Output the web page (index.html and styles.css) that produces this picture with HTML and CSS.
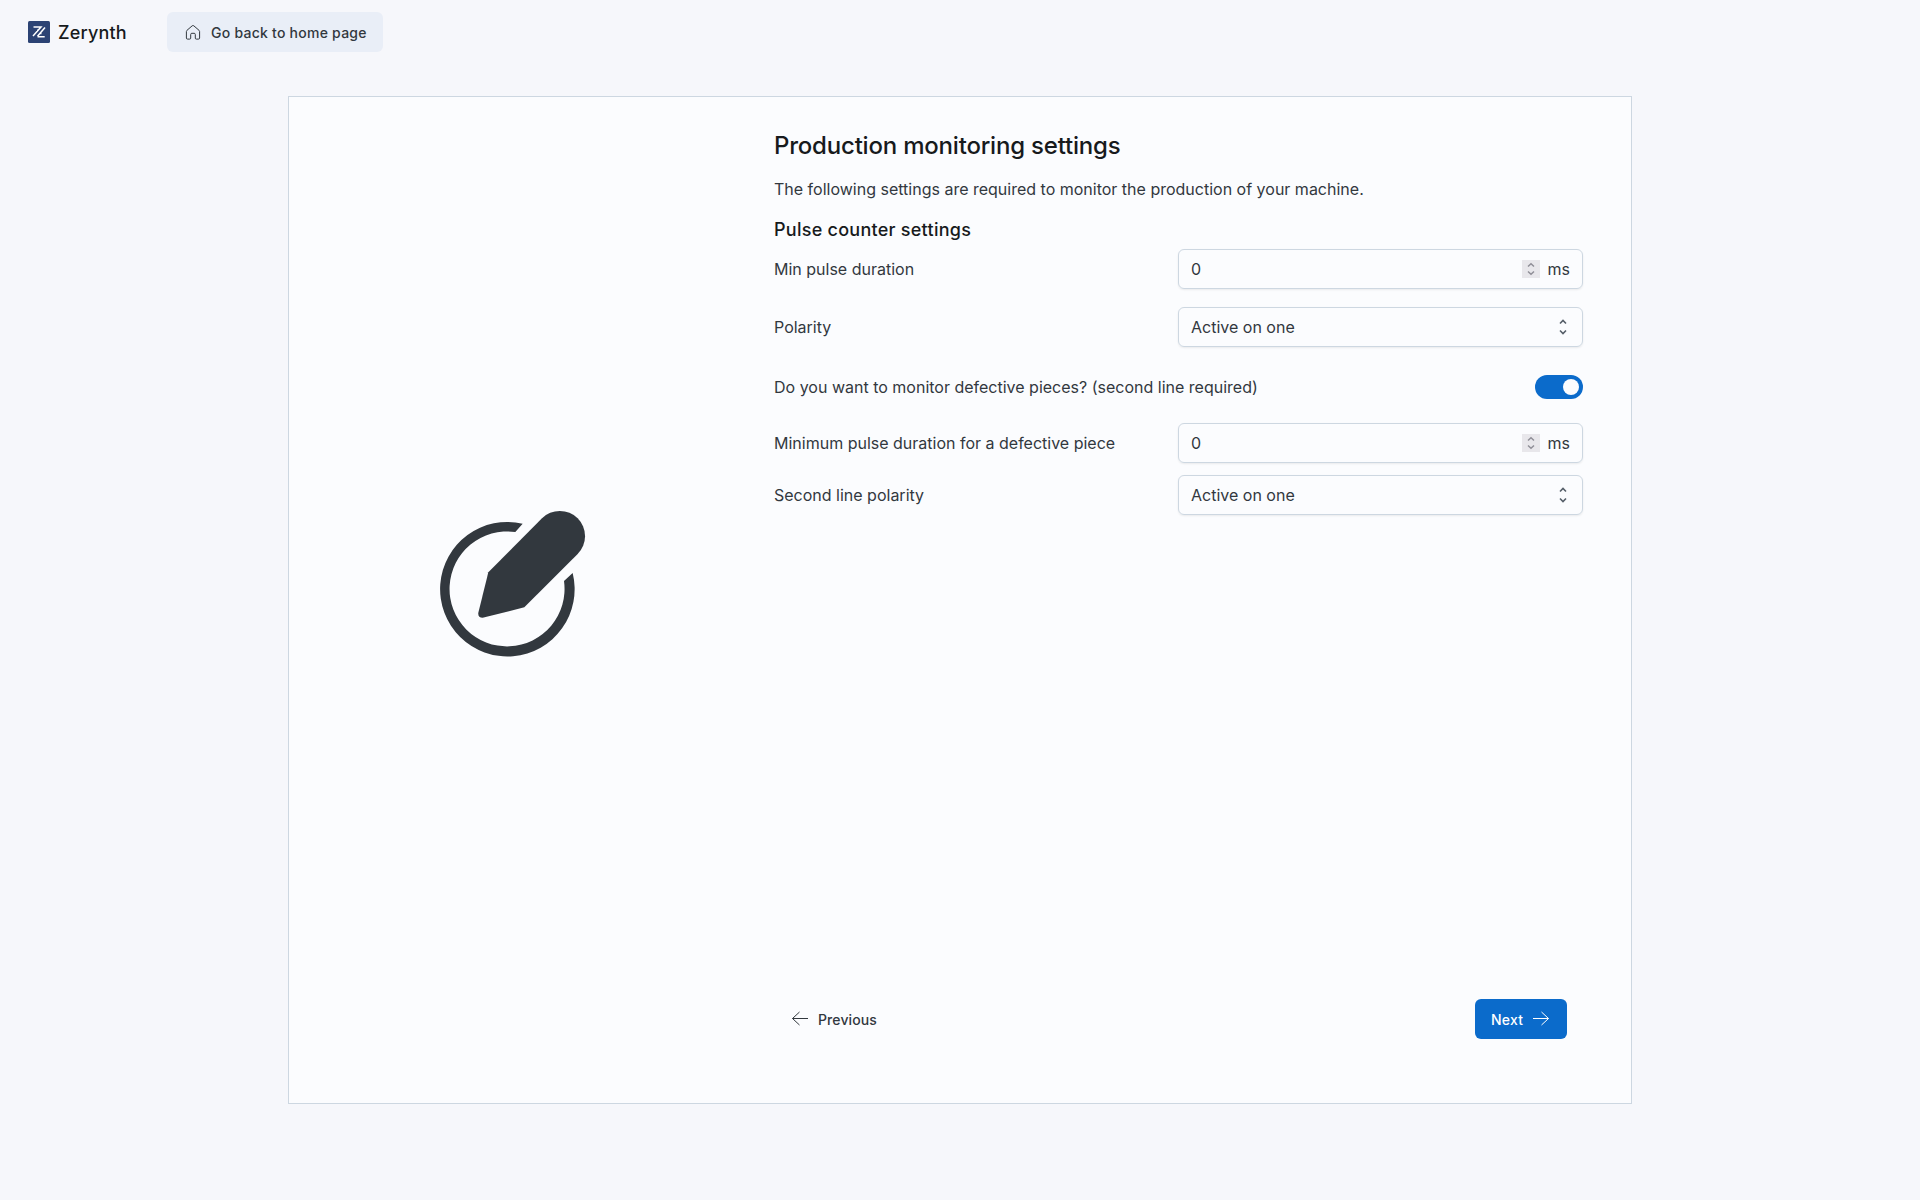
FILE: index.html
```html
<!DOCTYPE html>
<html lang="en">
<head>
<meta charset="utf-8">
<title>Zerynth</title>
<link rel="stylesheet" href="styles.css">
</head>
<body>
<header class="topbar">
  <div class="brand">
    <svg class="logo" viewBox="0 0 22 22"><rect width="22" height="22" rx="1.5" fill="#2c4374"/><path d="M5.500 6H13L5 15M9 9.200h1.500M9.500 15.700H16.700M17 6.500 9.500 15.300M11.500 12.600h2" fill="none" stroke="#fff" stroke-width="1.500"/></svg>
    <span class="brand-name">Zerynth</span>
  </div>
  <button class="home">
    <svg class="home-icon" viewBox="0 0 16 16"><path d="M7.200 1.300Q8 .7 8.800 1.300L14 5.800Q14.600 6.300 14.600 7V13.500Q14.600 14.600 13.500 14.600H11.300Q10.300 14.600 10.300 13.600V10Q10.300 8.800 9.200 8.800H6.800Q5.700 8.800 5.700 10V13.600Q5.700 14.600 4.700 14.600H2.500Q1.400 14.600 1.400 13.500V7Q1.400 6.300 2 5.800Z" fill="none" stroke="#32383e"/></svg>
    <span>Go back to home page</span>
  </button>
</header>
<main class="card">
  <aside class="side">
    <svg class="pen" viewBox="0 0 570 540" fill="#32383e"><path d="M308 101 286 126A172.500 172.500 0 1 0 432 273L458 249A201.800 201.800 0 1 1 308 101Z"/><path d="M366 85A75.500 75.500 0 0 1 473 192L313 352 188 383Q173 383 175 368L205 247Z"/></svg>
  </aside>
  <section class="content">
    <h1>Production monitoring settings</h1>
    <p class="intro">The following settings are required to monitor the production of your machine.</p>
    <h2>Pulse counter settings</h2>
    <div class="row">
      <span>Min pulse duration</span>
      <div class="field"><span class="value">0</span><span class="spin"><svg viewBox="0 0 18 18"><path d="M6 6.500 9 3.800 12 6.500M6 11.500 9 14.200 12 11.500"/></svg></span><span>ms</span></div>
    </div>
    <div class="row polarity">
      <span>Polarity</span>
      <div class="field"><span class="value">Active on one</span><svg class="updown" viewBox="0 0 20 20"><path d="M7 6.500 10 3.500 13 6.500M7 13.500 10 16.500 13 13.500"/></svg></div>
    </div>
    <div class="row switch-row">
      <span>Do you want to monitor defective pieces? (second line required)</span>
      <span class="switch"></span>
    </div>
    <div class="row">
      <span>Minimum pulse duration for a defective piece</span>
      <div class="field"><span class="value">0</span><span class="spin"><svg viewBox="0 0 18 18"><path d="M6 6.500 9 3.800 12 6.500M6 11.500 9 14.200 12 11.500"/></svg></span><span>ms</span></div>
    </div>
    <div class="row second">
      <span>Second line polarity</span>
      <div class="field"><span class="value">Active on one</span><svg class="updown" viewBox="0 0 20 20"><path d="M7 6.500 10 3.500 13 6.500M7 13.500 10 16.500 13 13.500"/></svg></div>
    </div>
    <footer class="actions">
      <button class="prev"><svg class="arrow" viewBox="0 0 18 16"><path d="M17 7.500H1.500M8.500 1 1.500 7.500 8.500 14"/></svg><span>Previous</span></button>
      <button class="next"><span>Next</span><svg class="arrow" viewBox="0 0 18 16"><path d="M1 7.500H16.500M9.500 1 16.500 7.500 9.500 14"/></svg></button>
    </footer>
  </section>
</main>
</body>
</html>
```
FILE: styles.css
```css
* { box-sizing: border-box; }
body {
  margin: 0;
  height: 1200px;
  background: #f6f7fb;
  color: #32383e;
  font: 16px/24px Inter, sans-serif;
}
button {
  display: flex;
  align-items: center;
  height: 40px;
  border: 0;
  border-radius: 6px;
  font: 500 14px/21px Inter, sans-serif;
  color: #32383e;
  background: transparent;
}
.topbar { display: flex; align-items: center; gap: 40px; height: 64px; padding-left: 28px; }
.brand { display: flex; align-items: center; gap: 8px; width: 99px; }
.logo { width: 22px; height: 22px; }
.brand-name { padding-top: 2px; font-size: 18px; font-weight: 500; letter-spacing: .2px; color: #171a1c; }
.home { width: 216px; padding: 0 16px 0 18px; gap: 10px; background: #e9eef7; white-space: nowrap; letter-spacing: .25px; }
.home-icon { width: 16px; height: 17px; }
.card {
  display: flex;
  width: 1344px;
  height: 1008px;
  margin: 32px auto 0;
  border: 1px solid #cdd7e1;
  background: #fbfcfe;
}
.side { width: 485px; padding: 393px 0 0 131px; }
.pen { display: block; width: 190px; height: 180px; }
.content { display: flex; flex-direction: column; width: 809px; height: 942px; padding-top: 33px; }
h1 { margin: 0; font-size: 24px; line-height: 32px; font-weight: 500; letter-spacing: -.2px; color: #171a1c; }
.intro { margin: 15px 0; }
h2 { margin: 0 0 5px; font-size: 18px; line-height: 28px; font-weight: 500; letter-spacing: .26px; color: #171a1c; }
.row { display: flex; align-items: center; justify-content: space-between; height: 40px; }
.field {
  display: flex;
  align-items: center;
  width: 405px;
  height: 40px;
  padding: 0 12px;
  border: 1px solid #cdd7e1;
  border-radius: 6px;
  box-shadow: 0 1px 2px rgba(21, 21, 21, .08);
}
.value { flex: 1; }
.spin { width: 18px; height: 18px; margin-right: 8px; background: #e8e7eb; }
.spin svg { display: block; fill: none; stroke: #8f8e97; stroke-width: 1.5; }
.updown { width: 20px; height: 20px; margin-right: -3px; fill: none; stroke: #555e68; stroke-width: 1.6; }
.polarity { margin-top: 18px; }
.switch-row { height: 24px; margin: 28px 0 24px; }
.switch { display: flex; justify-content: flex-end; width: 48px; height: 24px; padding: 4px; border-radius: 12px; background: #0b6bcb; }
.switch::after { content: ""; width: 16px; height: 16px; border-radius: 50%; background: #fbfcfe; }
.second { margin-top: 12px; }
.actions { display: flex; justify-content: space-between; margin-top: auto; padding: 0 16px 0 0; }
.prev { padding: 0 16px 0 17px; gap: 9px; letter-spacing: .1px; }
.next { width: 92px; padding: 0 16px; gap: 9px; background: #0b6bcb; color: #fff; letter-spacing: .2px; }
.arrow { width: 18px; height: 16px; fill: none; stroke: currentColor; }
```
